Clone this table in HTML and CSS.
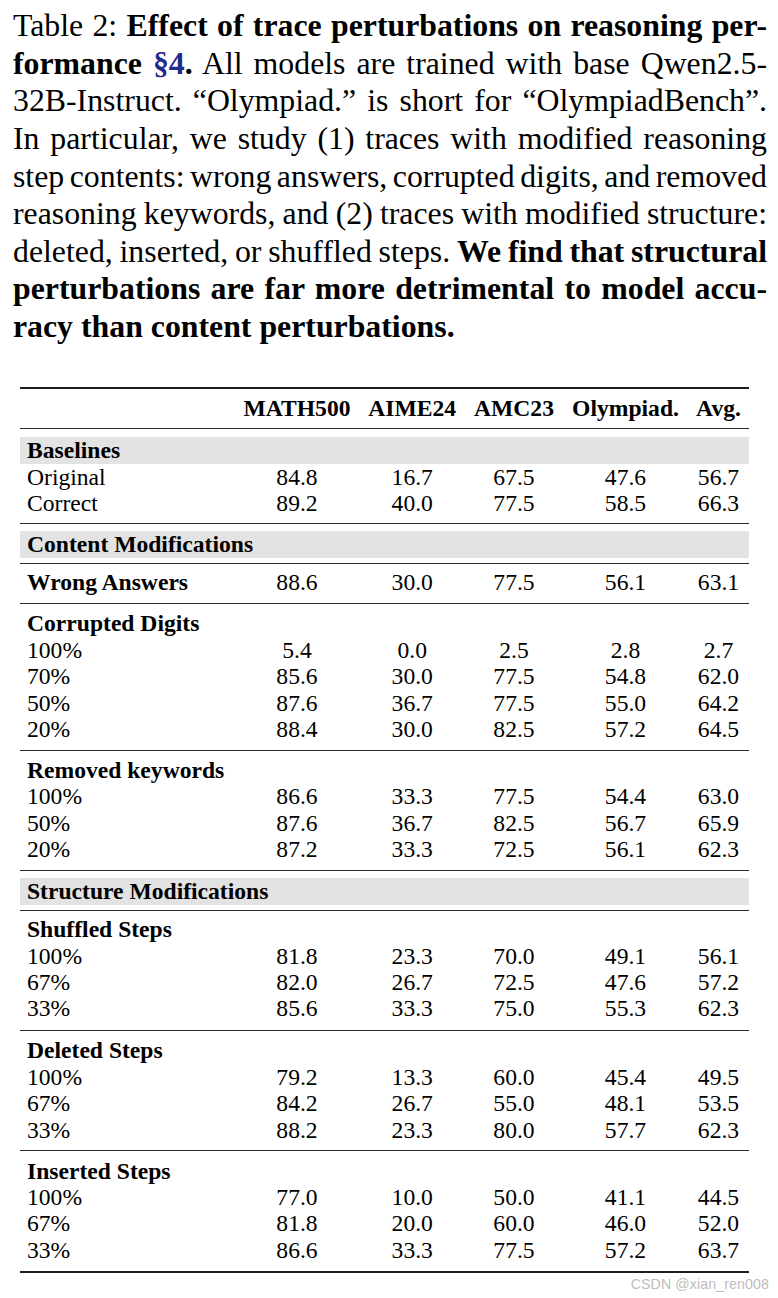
FILE: index.html
```html
<!DOCTYPE html>
<html lang="en">
<head>
<meta charset="utf-8">
<title>Table 2</title>
<link rel="stylesheet" href="styles.css">
</head>
<body>
<div class="page">
  <div class="caption">
    <span class="line">Table 2: <b>Effect of trace perturbations on reasoning per-</b></span>
    <span class="line"><b>formance <span class="ref">§4</span>.</b> All models are trained with base Qwen2.5-</span>
    <span class="line">32B-Instruct. “Olympiad.” is short for “OlympiadBench”.</span>
    <span class="line">In particular, we study (1) traces with modified reasoning</span>
    <span class="line">step contents: wrong answers, corrupted digits, and removed</span>
    <span class="line">reasoning keywords, and (2) traces with modified structure:</span>
    <span class="line">deleted, inserted, or shuffled steps. <b>We find that structural</b></span>
    <span class="line"><b>perturbations are far more detrimental to model accu-</b></span>
    <span class="line last"><b>racy than content perturbations.</b></span>
  </div>

  <div class="table">
    <div class="sec head">
      <div class="row bold"><span class="lbl"></span><span>MATH500</span><span>AIME24</span><span>AMC23</span><span>Olympiad.</span><span>Avg.</span></div>
    </div>

    <div class="sec s-base">
      <div class="row band bold"><span class="lbl">Baselines</span></div>
      <div class="row"><span class="lbl">Original</span><span>84.8</span><span>16.7</span><span>67.5</span><span>47.6</span><span>56.7</span></div>
      <div class="row"><span class="lbl">Correct</span><span>89.2</span><span>40.0</span><span>77.5</span><span>58.5</span><span>66.3</span></div>
    </div>

    <div class="sec s-band">
      <div class="row band bold"><span class="lbl">Content Modifications</span></div>
    </div>

    <div class="sec s-after">
      <div class="row"><span class="lbl bold">Wrong Answers</span><span>88.6</span><span>30.0</span><span>77.5</span><span>56.1</span><span>63.1</span></div>
    </div>

    <div class="sec">
      <div class="row bold"><span class="lbl">Corrupted Digits</span></div>
      <div class="row"><span class="lbl">100%</span><span>5.4</span><span>0.0</span><span>2.5</span><span>2.8</span><span>2.7</span></div>
      <div class="row"><span class="lbl">70%</span><span>85.6</span><span>30.0</span><span>77.5</span><span>54.8</span><span>62.0</span></div>
      <div class="row"><span class="lbl">50%</span><span>87.6</span><span>36.7</span><span>77.5</span><span>55.0</span><span>64.2</span></div>
      <div class="row"><span class="lbl">20%</span><span>88.4</span><span>30.0</span><span>82.5</span><span>57.2</span><span>64.5</span></div>
    </div>

    <div class="sec">
      <div class="row bold"><span class="lbl">Removed keywords</span></div>
      <div class="row"><span class="lbl">100%</span><span>86.6</span><span>33.3</span><span>77.5</span><span>54.4</span><span>63.0</span></div>
      <div class="row"><span class="lbl">50%</span><span>87.6</span><span>36.7</span><span>82.5</span><span>56.7</span><span>65.9</span></div>
      <div class="row"><span class="lbl">20%</span><span>87.2</span><span>33.3</span><span>72.5</span><span>56.1</span><span>62.3</span></div>
    </div>

    <div class="sec s-band">
      <div class="row band bold"><span class="lbl">Structure Modifications</span></div>
    </div>

    <div class="sec s-after s-long">
      <div class="row bold"><span class="lbl">Shuffled Steps</span></div>
      <div class="row"><span class="lbl">100%</span><span>81.8</span><span>23.3</span><span>70.0</span><span>49.1</span><span>56.1</span></div>
      <div class="row"><span class="lbl">67%</span><span>82.0</span><span>26.7</span><span>72.5</span><span>47.6</span><span>57.2</span></div>
      <div class="row"><span class="lbl">33%</span><span>85.6</span><span>33.3</span><span>75.0</span><span>55.3</span><span>62.3</span></div>
    </div>

    <div class="sec">
      <div class="row bold"><span class="lbl">Deleted Steps</span></div>
      <div class="row"><span class="lbl">100%</span><span>79.2</span><span>13.3</span><span>60.0</span><span>45.4</span><span>49.5</span></div>
      <div class="row"><span class="lbl">67%</span><span>84.2</span><span>26.7</span><span>55.0</span><span>48.1</span><span>53.5</span></div>
      <div class="row"><span class="lbl">33%</span><span>88.2</span><span>23.3</span><span>80.0</span><span>57.7</span><span>62.3</span></div>
    </div>

    <div class="sec">
      <div class="row bold"><span class="lbl">Inserted Steps</span></div>
      <div class="row"><span class="lbl">100%</span><span>77.0</span><span>10.0</span><span>50.0</span><span>41.1</span><span>44.5</span></div>
      <div class="row"><span class="lbl">67%</span><span>81.8</span><span>20.0</span><span>60.0</span><span>46.0</span><span>52.0</span></div>
      <div class="row"><span class="lbl">33%</span><span>86.6</span><span>33.3</span><span>77.5</span><span>57.2</span><span>63.7</span></div>
    </div>
  </div>

  <div class="watermark">CSDN @xian_ren008</div>
</div>
</body>
</html>
```

FILE: styles.css
```css
html, body {
  margin: 0;
  padding: 0;
  background: #ffffff;
}

.page {
  position: relative;
  width: 778px;
  height: 1298px;
  color: #000;
  font-family: "Liberation Serif", "Times New Roman", serif;
}

.caption {
  padding: 7.2px 11px 0 13px;
  font-size: 31.8px;
  line-height: 37.6px;
}

.caption .line {
  display: block;
  text-align: justify;
  text-align-last: justify;
  white-space: nowrap;
  word-spacing: -3px;
}

.caption .line.last {
  text-align: left;
  text-align-last: left;
  word-spacing: 0;
}

.caption b {
  font-weight: bold;
}

.caption .ref {
  color: #1f2a8c;
}

.table {
  margin: 41.4px 0 0 20px;
  width: 729px;
  border-top: 2px solid #1e1e1e;
  border-bottom: 2px solid #1e1e1e;
  font-size: 23.6px;
}

.sec {
  padding: 6.3px 0 7.2px;
  border-top: 1px solid #2a2a2a;
}

.sec.head {
  border-top: none;
  padding: 6.3px 0 6.8px;
}

.sec.s-base {
  padding-top: 7.8px;
  padding-bottom: 6.6px;
}

.sec.s-band {
  padding-top: 7.3px;
  padding-bottom: 5.3px;
}

.sec.s-after {
  padding-top: 5.2px;
}

.sec.s-long {
  padding-bottom: 8.2px;
}

.row {
  display: grid;
  grid-template-columns: 214.5px 125px 105.5px 98px 125px 61px;
  height: 26.45px;
  align-items: center;
  line-height: 26.45px;
  white-space: nowrap;
}

.row > span {
  text-align: center;
}

.row > span.lbl {
  text-align: left;
  padding-left: 7px;
}

.bold {
  font-weight: bold;
}

.band {
  background: #e3e3e3;
}

.watermark {
  position: absolute;
  right: 9px;
  top: 1274px;
  font-family: "Liberation Sans", Arial, sans-serif;
  font-size: 14.2px;
  line-height: 20px;
  color: #bdbdbd;
  letter-spacing: 0.1px;
}
```
